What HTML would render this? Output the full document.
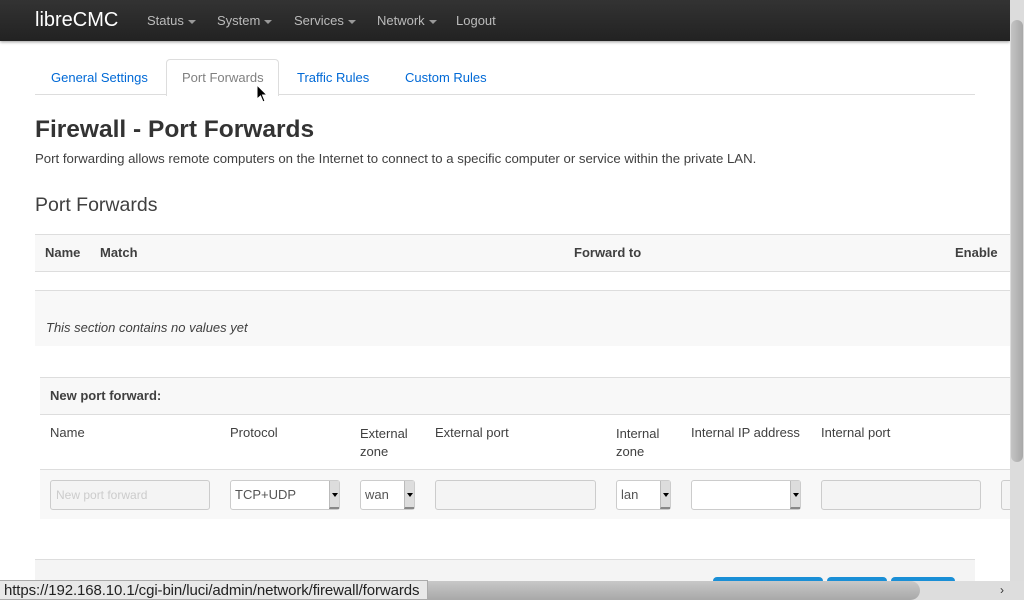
<!DOCTYPE html>
<html><head><meta charset="utf-8"><style>
*{box-sizing:border-box;margin:0;padding:0}
body{width:1024px;height:600px;overflow:hidden;position:relative;background:#fff;font-family:"Liberation Sans",sans-serif;color:#404040;font-size:13px}
.a{position:absolute;white-space:nowrap}
.nav{left:0;top:0;width:1010px;height:41px;background:linear-gradient(#333,#222);box-shadow:0 1px 3px rgba(0,0,0,.4)}
.nl{color:#bbb;font-size:13px;top:13px}
.car{display:inline-block;border-left:4px solid transparent;border-right:4px solid transparent;border-top:4px solid #999;vertical-align:middle;margin-left:4px}
.tab{color:#0069d6;font-size:13px;top:70px}
.inp{border:1px solid #ccc;border-radius:3px;background:#f4f4f4;height:30px;top:480px}
.sel{border:1px solid #ccc;border-radius:3px;background:#fff;height:30px;top:480px;font-size:13px;color:#555;padding:6px 4px}
.sel i{position:absolute;right:0;top:0;width:10px;height:28px;background:#ddd;border-left:1px solid #bbb;border-bottom:2px solid #888}
.sel i:after{content:"";position:absolute;left:2px;top:12px;border-left:3px solid transparent;border-right:3px solid transparent;border-top:4px solid #000}
.h{font-size:13px;color:#404040}
</style></head><body>
<div class="a nav"></div>
<div class="a" style="left:35px;top:9px;font-size:20px;color:#fff">libreCMC</div>
<div class="a nl" style="left:147px">Status<span class="car"></span></div>
<div class="a nl" style="left:217px">System<span class="car"></span></div>
<div class="a nl" style="left:294px">Services<span class="car"></span></div>
<div class="a nl" style="left:377px">Network<span class="car"></span></div>
<div class="a nl" style="left:456px">Logout</div>

<div class="a" style="left:35px;top:94px;width:940px;height:1px;background:#ddd"></div>
<div class="a" style="left:166px;top:59px;width:113px;height:37px;border:1px solid #ddd;border-bottom:none;border-radius:4px 4px 0 0;background:#fff"></div>
<div class="a tab" style="left:51px">General Settings</div>
<div class="a tab" style="left:182px;color:#808080">Port Forwards</div>
<div class="a tab" style="left:297px">Traffic Rules</div>
<div class="a tab" style="left:405px">Custom Rules</div>

<div class="a" style="left:35px;top:116px;font-size:24.5px;font-weight:bold;color:#333">Firewall - Port Forwards</div>
<div class="a" style="left:35px;top:151px;font-size:13.2px">Port forwarding allows remote computers on the Internet to connect to a specific computer or service within the private LAN.</div>
<div class="a" style="left:35px;top:194px;font-size:19.5px;color:#404040">Port Forwards</div>

<div class="a" style="left:35px;top:234px;width:975px;height:38px;background:#f8f8f8;border-top:1px solid #ddd;border-bottom:1px solid #ddd"></div>
<div class="a h" style="left:45px;top:245px;font-weight:bold">Name</div>
<div class="a h" style="left:100px;top:245px;font-weight:bold">Match</div>
<div class="a h" style="left:574px;top:245px;font-weight:bold">Forward to</div>
<div class="a h" style="left:955px;top:245px;font-weight:bold">Enable</div>
<div class="a" style="left:35px;top:290px;width:975px;height:56px;background:#f8f8f8;border-top:1px solid #ddd"></div>
<div class="a h" style="left:46px;top:320px;font-style:italic">This section contains no values yet</div>

<div class="a" style="left:40px;top:377px;width:970px;height:142px;background:#f8f8f8;border-top:1px solid #ddd"></div>
<div class="a" style="left:40px;top:414px;width:970px;height:56px;background:#fff;border-top:1px solid #ddd;border-bottom:1px solid #ddd"></div>
<div class="a h" style="left:50px;top:388px;font-weight:bold">New port forward:</div>
<div class="a h" style="left:50px;top:425px">Name</div>
<div class="a h" style="left:230px;top:425px">Protocol</div>
<div class="a h" style="left:360px;top:425px;line-height:18px">External<br>zone</div>
<div class="a h" style="left:435px;top:425px">External port</div>
<div class="a h" style="left:616px;top:425px;line-height:18px">Internal<br>zone</div>
<div class="a h" style="left:691px;top:425px">Internal IP address</div>
<div class="a h" style="left:821px;top:425px">Internal port</div>

<div class="a inp" style="left:50px;width:160px;color:#ccc;font-size:12px;padding:7px 5px">New port forward</div>
<div class="a sel" style="left:230px;width:110px">TCP+UDP<i></i></div>
<div class="a sel" style="left:360px;width:55px">wan<i></i></div>
<div class="a inp" style="left:435px;width:161px"></div>
<div class="a sel" style="left:616px;width:55px">lan<i></i></div>
<div class="a sel" style="left:691px;width:110px"><i></i></div>
<div class="a inp" style="left:821px;width:160px"></div>
<div class="a inp" style="left:1001px;width:12px"></div>

<div class="a" style="left:35px;top:559px;width:940px;height:41px;background:#f4f4f4;border-top:1px solid #ddd"></div>
<div class="a" style="left:713px;top:577px;width:110px;height:10px;background:#1a8fd6;border-radius:4px 4px 0 0"></div>
<div class="a" style="left:827px;top:577px;width:60px;height:10px;background:#1a8fd6;border-radius:4px 4px 0 0"></div>
<div class="a" style="left:891px;top:577px;width:64px;height:10px;background:#1a8fd6;border-radius:4px 4px 0 0"></div>

<div class="a" style="left:1010px;top:0;width:14px;height:581px;background:#dcdcdc"></div>
<div class="a" style="left:1011px;top:20px;width:12px;height:442px;background:linear-gradient(90deg,#c4c4c4,#a8a8a8);border-radius:6px"></div>
<div class="a" style="left:0;top:581px;width:1024px;height:19px;background:#ddd"></div>
<div class="a" style="left:0;top:581px;width:920px;height:19px;background:linear-gradient(#c8c8c8,#a8a8a8);border-radius:0 10px 10px 0"></div>
<div class="a" style="left:1000px;top:583px;font-size:12px;color:#333">›</div>
<div class="a" style="left:0;top:580px;width:428px;height:20px;background:#e8e8e8;border:1px solid #aaa;border-left:none;font-size:15px;color:#222;padding:1px 4px;letter-spacing:-0.1px;overflow:hidden">https://192.168.10.1/cgi-bin/luci/admin/network/firewall/forwards</div>
<svg class="a" style="left:256px;top:84px" width="12" height="19" viewBox="0 0 12 19"><path d="M1 1 L1 15 L4.5 12 L7 18 L9 17 L6.5 11 L11 11 Z" fill="#000" stroke="#fff" stroke-width="1"/></svg>
</body></html>
